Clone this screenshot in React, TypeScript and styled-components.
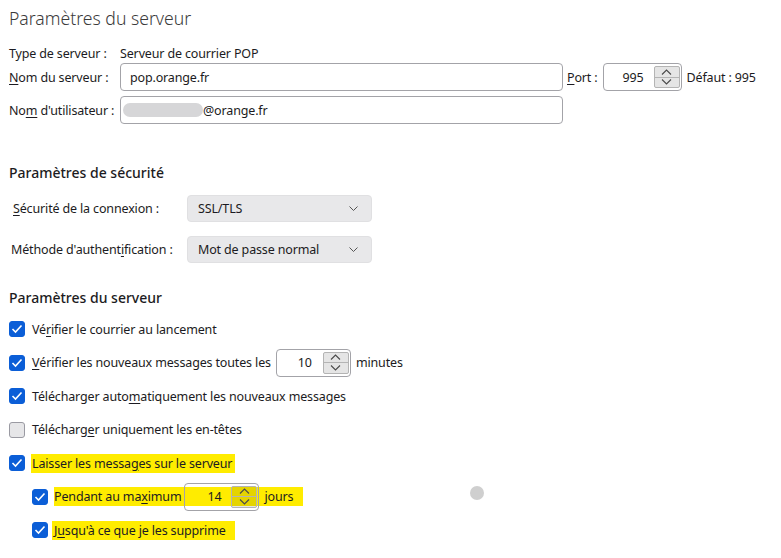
import React from "react";
import styled, { createGlobalStyle } from "styled-components";

const Global = createGlobalStyle`
  html, body { margin: 0; padding: 0; background: #ffffff; }
  body {
    font-family: "Noto Sans", "Open Sans", sans-serif;
    font-size: 12.5px;
    letter-spacing: -0.15px;
    color: #1c1b22;
  }
  u { text-decoration-thickness: 1px; text-underline-offset: 2px; }
`;

const Page = styled.div`
  position: relative;
  width: 781px;
  height: 558px;
  overflow: hidden;
  box-sizing: border-box;
  padding-left: 9px;
  display: flex;
  flex-direction: column;
`;

const Title = styled.h1`
  margin: 6px 0 0;
  height: 24px;
  line-height: 24px;
  font-size: 17.6px;
  font-weight: 300;
  letter-spacing: 0;
  color: #3b3b3b;
`;

const Row = styled.div<{ $h: number; $mt: number }>`
  display: flex;
  align-items: center;
  height: ${(p) => p.$h}px;
  margin-top: ${(p) => p.$mt}px;
  white-space: nowrap;
`;

const Label = styled.span<{ $w: number; $pl?: number }>`
  width: ${(p) => p.$w}px;
  padding-left: ${(p) => p.$pl ?? 0}px;
  box-sizing: border-box;
  flex-shrink: 0;
`;

const Text = styled.span<{ $ml?: number }>`
  margin-left: ${(p) => p.$ml ?? 0}px;
`;

const TextField = styled.div`
  width: 443px;
  height: 28px;
  box-sizing: border-box;
  border: 1px solid #a3a3a8;
  border-radius: 4px;
  display: flex;
  align-items: center;
  padding-left: 9px;
  background: #fff;
`;

const Blur = styled.span`
  display: inline-block;
  width: 80px;
  height: 14px;
  border-radius: 7px;
  background: #d6d6d8;
  margin-left: -7px;
`;

const SpinBox = styled.div<{ $w: number; $ml: number; $clear?: boolean }>`
  width: ${(p) => p.$w}px;
  height: 28px;
  margin-left: ${(p) => p.$ml}px;
  box-sizing: border-box;
  border: 1px solid #a3a3a8;
  border-radius: 4px;
  background: ${(p) => (p.$clear ? "transparent" : "#fff")};
  display: flex;
  align-items: center;
  padding: 2px 1px 2px 0;
  flex-shrink: 0;
`;

const SpinValue = styled.span<{ $pr: number }>`
  flex: 1;
  text-align: right;
  padding-right: ${(p) => p.$pr}px;
`;

const SpinButtons = styled.div`
  width: 26px;
  height: 22px;
  box-sizing: border-box;
  border: 1px solid #b4b4b4;
  border-radius: 2px;
  background: rgba(0, 0, 0, 0.1);
  display: flex;
  flex-direction: column;
`;

const SpinHalf = styled.div<{ $top?: boolean }>`
  flex: 1;
  display: flex;
  align-items: center;
  justify-content: center;
  border-bottom: ${(p) => (p.$top ? "1px solid #b4b4b4" : "none")};
`;

const Chevron = ({ up }: { up?: boolean }) => (
  <svg width="11" height="6" viewBox="0 0 11 6">
    <polyline
      points={up ? "1,5.5 5.5,1 10,5.5" : "1,0.5 5.5,5 10,0.5"}
      fill="none"
      stroke="#4a4a4a"
      strokeWidth="1.1"
    />
  </svg>
);

const Spinner = ({ value, w, ml, pr, clear }: { value: string; w: number; ml: number; pr: number; clear?: boolean }) => (
  <SpinBox $w={w} $ml={ml} $clear={clear}>
    <SpinValue $pr={pr}>{value}</SpinValue>
    <SpinButtons>
      <SpinHalf $top>
        <Chevron up />
      </SpinHalf>
      <SpinHalf>
        <Chevron />
      </SpinHalf>
    </SpinButtons>
  </SpinBox>
);

const Heading = styled.h2<{ $mt: number }>`
  margin: ${(p) => p.$mt}px 0 0;
  height: 20px;
  line-height: 20px;
  font-size: 14px;
  font-weight: 500;
  letter-spacing: 0;
  color: #1c1b22;
`;

const Select = styled.div`
  width: 185px;
  height: 27px;
  box-sizing: border-box;
  background: #e8e8ea;
  border: 1px solid #e0e0e2;
  border-radius: 4px;
  display: flex;
  align-items: center;
  justify-content: space-between;
  padding: 0 13px 0 10px;
`;

const SelectChevron = () => (
  <svg width="9" height="5" viewBox="0 0 9 5">
    <polyline points="0.5,0.5 4.5,4.5 8.5,0.5" fill="none" stroke="#555" strokeWidth="1" />
  </svg>
);

const CheckList = styled.div`
  display: flex;
  flex-direction: column;
  gap: 5.5px;
  margin-top: 7px;
`;

const CheckRow = styled.div<{ $indent?: boolean }>`
  display: flex;
  align-items: center;
  height: 28px;
  padding-left: ${(p) => (p.$indent ? 23 : 0)}px;
  white-space: nowrap;
`;

const Box = styled.span<{ $on: boolean }>`
  width: 16px;
  height: 16px;
  box-sizing: border-box;
  border-radius: 3px;
  flex-shrink: 0;
  display: flex;
  align-items: center;
  justify-content: center;
  background: ${(p) => (p.$on ? "#0b5ed7" : "#e6e6e8")};
  border: 1px solid ${(p) => (p.$on ? "#0b5ed7" : "#9a9aa2")};
`;

const Check = ({ on }: { on: boolean }) => (
  <Box $on={on}>
    {on && (
      <svg width="12" height="10" viewBox="0 0 12 10">
        <polyline points="1.5,5 4.5,8 10.5,1.5" fill="none" stroke="#fff" strokeWidth="1.6" />
      </svg>
    )}
  </Box>
);

const CheckLabel = styled.span<{ $ml: number }>`
  margin-left: ${(p) => p.$ml}px;
  display: flex;
  align-items: center;
`;

const Mark = styled.span<{ $pl: number; $pr: number }>`
  display: inline-flex;
  align-items: center;
  height: 19px;
  background: #ffec00;
  padding-left: ${(p) => p.$pl}px;
  padding-right: ${(p) => p.$pr}px;
`;

const Dot = styled.span`
  position: absolute;
  left: 470px;
  top: 486px;
  width: 14px;
  height: 14px;
  border-radius: 50%;
  background: #cfcfcf;
`;

export default function App() {
  return (
    <>
      <Global />
      <Page>
        <Title>Paramètres du serveur</Title>

        <Row $h={18} $mt={14}>
          <Label $w={111}>Type de serveur :</Label>
          <Text>Serveur de courrier POP</Text>
        </Row>
        <Row $h={28} $mt={1}>
          <Label $w={111}>
            <u>N</u>om du serveur :
          </Label>
          <TextField>pop.orange.fr</TextField>
          <Text $ml={4}>
            <u>P</u>ort :
          </Text>
          <Spinner value="995" w={79} ml={5} pr={10} />
          <Text $ml={5}>Défaut : 995</Text>
        </Row>
        <Row $h={28} $mt={5}>
          <Label $w={111}>
            No<u>m</u> d'utilisateur :
          </Label>
          <TextField>
            <Blur />
            @orange.fr
          </TextField>
        </Row>

        <Heading $mt={39}>Paramètres de sécurité</Heading>
        <Row $h={27} $mt={12}>
          <Label $w={178} $pl={4}>
            <u>S</u>écurité de la connexion :
          </Label>
          <Select>
            <span>SSL/TLS</span>
            <SelectChevron />
          </Select>
        </Row>
        <Row $h={27} $mt={14}>
          <Label $w={178} $pl={2}>
            Méthode d'authent<u>i</u>fication :
          </Label>
          <Select>
            <span>Mot de passe normal</span>
            <SelectChevron />
          </Select>
        </Row>

        <Heading $mt={25}>Paramètres du serveur</Heading>
        <CheckList>
          <CheckRow>
            <Check on />
            <CheckLabel $ml={7}>
              Vé<u>r</u>ifier le courrier au lancement
            </CheckLabel>
          </CheckRow>
          <CheckRow>
            <Check on />
            <CheckLabel $ml={7}>
              <u>V</u>érifier les nouveaux messages toutes les
              <Spinner value="10" w={75} ml={5} pr={11} />
              <Text $ml={5}>minutes</Text>
            </CheckLabel>
          </CheckRow>
          <CheckRow>
            <Check on />
            <CheckLabel $ml={7}>
              Télécharger auto<u>m</u>atiquement les nouveaux messages
            </CheckLabel>
          </CheckRow>
          <CheckRow>
            <Check on={false} />
            <CheckLabel $ml={7}>
              Télécharg<u>e</u>r uniquement les en-têtes
            </CheckLabel>
          </CheckRow>
          <CheckRow>
            <Check on />
            <CheckLabel $ml={6}>
              <Mark $pl={1} $pr={3}>
                Laisser les messa<u>g</u>es sur le serveur
              </Mark>
            </CheckLabel>
          </CheckRow>
          <CheckRow $indent>
            <Check on />
            <CheckLabel $ml={6}>
              <Mark $pl={0} $pr={10}>
                Pendant au ma<u>x</u>imum
                <Spinner value="14" w={75} ml={3} pr={10} clear />
                <Text $ml={5}>jours</Text>
              </Mark>
            </CheckLabel>
          </CheckRow>
          <CheckRow $indent>
            <Check on />
            <CheckLabel $ml={4}>
              <Mark $pl={2} $pr={9}>
                J<u>u</u>squ'à ce que je les supprime
              </Mark>
            </CheckLabel>
          </CheckRow>
        </CheckList>
        <Dot />
      </Page>
    </>
  );
}
